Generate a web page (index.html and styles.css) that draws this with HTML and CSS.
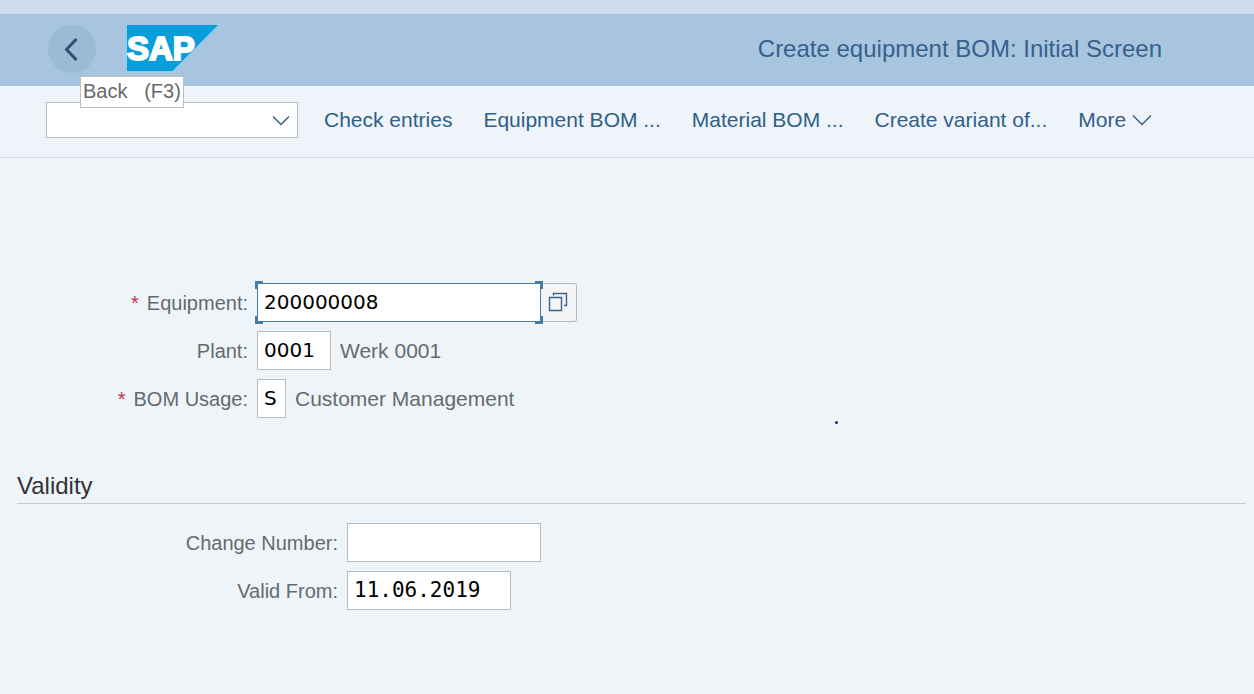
FILE: index.html
```html
<!DOCTYPE html>
<html lang="en">
<head>
<meta charset="utf-8">
<title>Create equipment BOM: Initial Screen</title>
<link rel="stylesheet" href="styles.css">
</head>
<body>
<div class="top-strip"></div>
<header class="shell">
  <div class="back-wrap">
    <button class="back" type="button" aria-label="Back" aria-describedby="back-tip">
      <svg width="48" height="48" viewBox="0 0 48 48"><path d="M28.500 14 18.500 24.500 28.500 35" fill="none" stroke="#2c5075" stroke-width="3"/></svg>
    </button>
    <span class="tooltip" id="back-tip" role="tooltip">Back   (F3)</span>
  </div>
  <svg class="logo" width="94" height="48" viewBox="0 0 94 48" role="img" aria-label="SAP">
    <path d="M0 0H94L47 47H0Z" fill="#8ccdf0"/>
    <path d="M1 0H92L46.500 46H1Z" fill="#089edb"/>
    <text class="logo-text" x="1" y="35">SAP</text>
  </svg>
  <h1 class="title">Create equipment BOM: Initial Screen</h1>
</header>
<nav class="toolbar" aria-label="Actions">
  <select class="command" aria-label="Command"><option></option></select>
  <button class="action" type="button">Check entries</button>
  <button class="action" type="button">Equipment BOM ...</button>
  <button class="action" type="button">Material BOM ...</button>
  <button class="action" type="button">Create variant of...</button>
  <button class="action more" type="button">More
    <svg width="20" height="12" viewBox="0 0 20 12"><path d="M1 1.500 10 10.500 19 1.500" fill="none" stroke="#3a5f85" stroke-width="1.400"/></svg>
  </button>
</nav>
<main class="content">
  <span class="mark"></span>
  <form>
    <section class="fields">
      <div class="row">
        <label for="equipment"><span class="required">*</span>Equipment:</label>
        <div class="lookup">
          <div class="focus-frame">
            <input class="box equipment" id="equipment" type="text" value="200000008">
            <i class="corner tl"></i><i class="corner tr"></i><i class="corner bl"></i><i class="corner br"></i>
          </div>
          <button class="value-help" type="button" aria-label="Value help">
            <svg width="20" height="20" viewBox="0 0 20 20"><path d="M1.500 5.500H13.500V18.500H1.500ZM5.500 3.500V1.500H18.500V13.500H16" fill="none" stroke="#39648d" stroke-width="1.400"/></svg>
          </button>
        </div>
      </div>
      <div class="row">
        <label for="plant">Plant:</label>
        <input class="box plant" id="plant" type="text" value="0001">
        <span class="hint">Werk 0001</span>
      </div>
      <div class="row">
        <label for="usage"><span class="required">*</span>BOM Usage:</label>
        <input class="box usage" id="usage" type="text" value="S">
        <span class="hint">Customer Management</span>
      </div>
    </section>
    <section class="validity">
      <h2 class="section-title">Validity</h2>
      <div class="fields wide">
        <div class="row">
          <label for="change">Change Number:</label>
          <input class="box change" id="change" type="text">
        </div>
        <div class="row">
          <label for="valid">Valid From:</label>
          <input class="box date" id="valid" type="text" value="11.06.2019">
        </div>
      </div>
    </section>
  </form>
</main>
</body>
</html>
```
FILE: styles.css
```css
* { box-sizing: border-box; }
body {
  margin: 0;
  min-height: 100vh;
  background: #eff4f8;
  color: #666a6d;
  font: 20px/24px "Liberation Sans", Arial, sans-serif;
}
button { font: inherit; }
svg { display: block; flex: none; }

.top-strip { height: 14px; background: #cddcea; border-bottom: 1px solid #c5dced; }

.shell {
  display: flex;
  align-items: center;
  height: 72px;
  padding: 0 92px 0 48px;
  background: #a8c5df;
  border-bottom: 2px solid #a6bfdb;
}
.back-wrap { position: relative; margin-right: 30px; }
.back {
  display: block;
  width: 48px;
  height: 48px;
  padding: 0;
  border: 0;
  border-radius: 50%;
  background: #9bbbd4;
}
.tooltip {
  position: absolute;
  z-index: 1;
  top: 51px;
  left: 32px;
  padding: 0 2px 2px;
  border: 1px solid #bfbfbf;
  background: #fff;
  line-height: 28px;
  white-space: pre;
}
.logo-text {
  font: bold 33px "Liberation Sans", Arial, sans-serif;
  fill: #fff;
  stroke: #fff;
  stroke-width: 2px;
}
.title {
  margin: 0 0 0 auto;
  color: #35618c;
  font-size: 24px;
  font-weight: normal;
  line-height: 28px;
}

.toolbar {
  display: flex;
  align-items: center;
  gap: 31px;
  height: 72px;
  padding: 0 46px 4px;
  border-bottom: 1px solid #d0dfee;
  background: #eef4f9;
}
.command {
  width: 252px;
  height: 36px;
  margin-right: -5px;
  border: 1px solid #b5bcc3;
  border-radius: 0;
  appearance: none;
  background: #fff url("data:image/svg+xml,%3Csvg xmlns='http://www.w3.org/2000/svg' width='18' height='12'%3E%3Cpath d='M1 2.500 9 10.500 17 2.500' fill='none' stroke='%233a5f85' stroke-width='1.500'/%3E%3C/svg%3E") no-repeat right 7px center;
}
.action {
  padding: 0;
  border: 0;
  background: none;
  color: #2f5f8a;
  font-size: 21px;
  white-space: nowrap;
}
.more { display: flex; align-items: center; gap: 6px; }

.content { position: relative; padding: 125px 8px 0 17px; }
.mark {
  position: absolute;
  top: 263px;
  left: 835px;
  width: 3px;
  height: 3px;
  border-radius: 50%;
  background: #1c1c9c;
}
.fields { display: grid; gap: 9px; }
.row {
  display: grid;
  grid-template-columns: 231px auto 1fr;
  column-gap: 9px;
  align-items: center;
}
.wide .row { grid-template-columns: 321px auto 1fr; }
.row label { text-align: right; }
.hint { font-size: 21px; }
.required { margin-right: 8px; color: #c8334f; }
.box {
  display: block;
  height: 39px;
  padding: 0 6px 2px;
  border: 1px solid #b5bcc3;
  background: #fff;
  color: #000;
  font: 20px "DejaVu Sans", sans-serif;
  outline: 0;
}
.equipment { width: 284px; border-color: #427ca8; }
.plant { width: 74px; }
.usage { width: 29px; }
.change { width: 194px; }
.date { width: 164px; font: 21px "DejaVu Sans Mono", monospace; }
.lookup { display: flex; }
.focus-frame { position: relative; }
.corner { position: absolute; width: 8px; height: 8px; border: 0 solid #427ca8; }
.tl { top: -2px; left: -2px; border-width: 3px 0 0 3px; }
.tr { top: -2px; right: -2px; border-width: 3px 3px 0 0; }
.bl { bottom: -2px; left: -2px; border-width: 0 0 3px 3px; }
.br { right: -2px; bottom: -2px; border-width: 0 3px 3px 0; }
.value-help {
  width: 36px;
  padding: 0 0 2px 7px;
  border: 1px solid #b5b9bd;
  border-left: 0;
  border-radius: 0 3px 3px 0;
  background: #f3f5f7;
}
.validity { margin-top: 54px; }
.section-title {
  margin: 0 0 19px;
  padding-bottom: 3px;
  border-bottom: 1px solid #bfcad2;
  color: #333;
  font-size: 24px;
  font-weight: normal;
  line-height: 28px;
}
```
